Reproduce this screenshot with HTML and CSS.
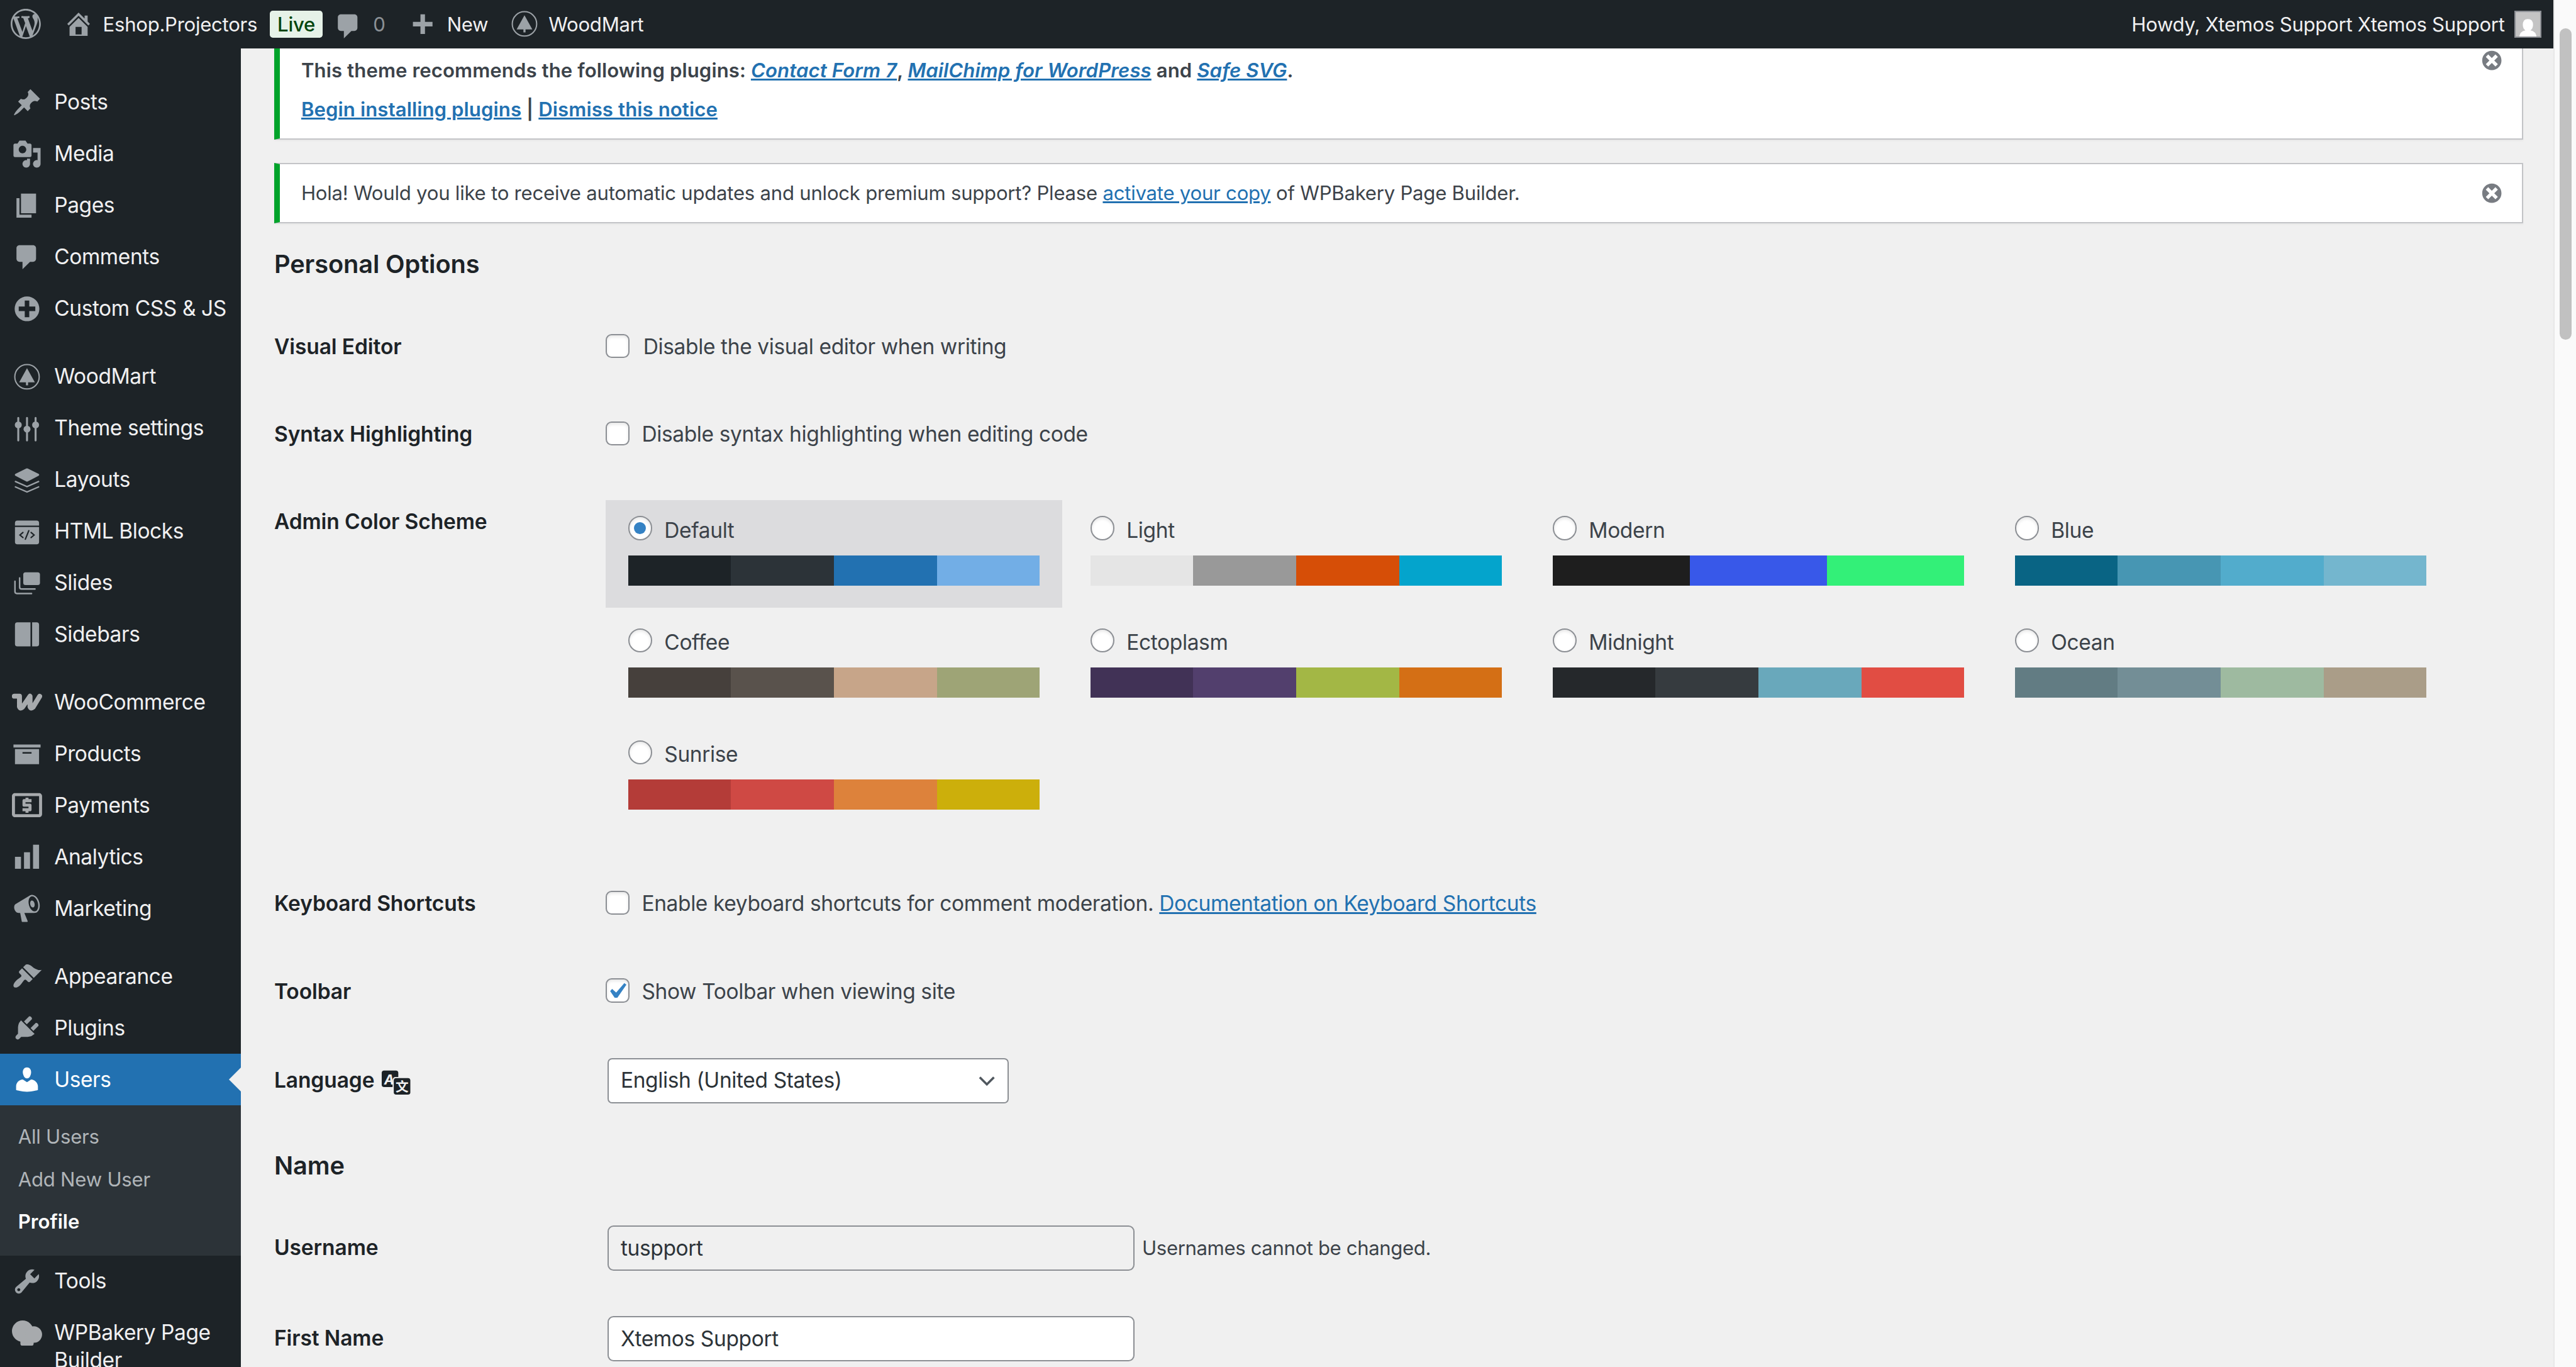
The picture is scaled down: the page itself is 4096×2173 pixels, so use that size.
FILE: index.html
```html
<!DOCTYPE html>
<html lang="en-US">
  <head>
    <meta charset="utf-8">
    <title>Profile</title>
    <link rel="stylesheet" href="styles.css">
  </head>
  <body>
    <svg class="sprite" aria-hidden="true">
      <symbol id="i-wordpress" viewBox="0 0 20 20"><path d="M20 10c0-5.51-4.49-10-10-10C4.48 0 0 4.49 0 10c0 5.52 4.48 10 10 10 5.51 0 10-4.48 10-10zM7.78 15.37L4.37 6.22c.55-.02 1.17-.08 1.17-.08.5-.06.44-1.13-.06-1.11 0 0-1.45.11-2.37.11-.18 0-.37 0-.58-.01C4.12 2.69 6.87 1.11 10 1.11c2.33 0 4.45.87 6.05 2.34-.68-.11-1.65.39-1.65 1.58 0 .74.45 1.36.9 2.1.35.61.55 1.36.55 2.46 0 1.49-1.4 5-1.4 5l-3.03-8.37c.54-.02.82-.17.82-.17.5-.05.44-1.25-.06-1.22 0 0-1.44.12-2.38.12-.87 0-2.33-.12-2.33-.12-.5-.03-.56 1.2-.06 1.22l.92.08 1.26 3.41zM17.41 10c.24-.64.74-1.87.43-4.25.7 1.29 1.05 2.71 1.05 4.25 0 3.29-1.73 6.24-4.4 7.78.97-2.59 1.94-5.2 2.92-7.78zM6.1 18.09C3.12 16.65 1.11 13.53 1.11 10c0-1.3.23-2.48.72-3.59C3.25 10.3 4.67 14.2 6.1 18.09zm4.03-6.63l2.58 6.98c-.86.29-1.76.45-2.71.45-.79 0-1.57-.11-2.29-.33.81-2.38 1.62-4.74 2.42-7.1z"/></symbol>
      <symbol id="i-home" viewBox="0 0 20 20"><path d="M16 8.5l1.53 1.53-1.06 1.06L10 4.6l-6.47 6.49-1.06-1.06L10 2.5l4 4v-2h2v4zm-6-2.46l6 5.99V18H4v-5.97zM12 17v-5H8v5h4z"/></symbol>
      <symbol id="i-comment" viewBox="0 0 20 20"><path d="M5 2h9c1.1 0 2 .9 2 2v7c0 1.1-.9 2-2 2h-2l-5 5v-5H5c-1.1 0-2-.9-2-2V4c0-1.1.9-2 2-2z"/></symbol>
      <symbol id="i-plus" viewBox="0 0 20 20"><path d="M17 7v3h-5v5H9v-5H4V7h5V2h3v5h5z"/></symbol>
      <symbol id="i-woodmart" viewBox="0 0 20 20"><circle cx="10" cy="10" r="8.1" fill="none" stroke="currentColor" stroke-width=".85"/><path d="M10 4.3l5.2 9.4h-4.5v2H9.3v-2H4.8z"/></symbol>
      <symbol id="i-post" viewBox="0 0 20 20"><path d="M10.44 3.02l1.82-1.82 6.36 6.35-1.83 1.82c-1.05-.68-2.48-.57-3.41.36l-.75.75c-.92.93-1.04 2.35-.35 3.41l-1.83 1.82-2.41-2.41-2.8 2.79c-.42.42-3.38 2.71-3.8 2.29s1.86-3.39 2.28-3.81l2.79-2.79L4.1 9.36l1.83-1.82c1.05.69 2.48.57 3.4-.36l.75-.75c.93-.92 1.05-2.35.36-3.41z"/></symbol>
      <symbol id="i-media" viewBox="0 0 20 20"><path d="M13 11V4c0-.55-.45-1-1-1h-1.67L9 1H5L3.67 3H2c-.55 0-1 .45-1 1v7c0 .55.45 1 1 1h10c.55 0 1-.45 1-1zM7 4.5c1.38 0 2.5 1.12 2.5 2.5S8.38 9.5 7 9.5 4.5 8.38 4.5 7 5.62 4.5 7 4.5zM14 6h5v10.5c0 1.38-1.12 2.5-2.5 2.5S14 17.88 14 16.5s1.12-2.5 2.5-2.5c.17 0 .34.02.5.05V9h-3V6zm-4 8.05V13h2v3.5c0 1.38-1.12 2.5-2.5 2.5S7 17.88 7 16.5 8.12 14 9.5 14c.17 0 .34.02.5.05z"/></symbol>
      <symbol id="i-page" viewBox="0 0 20 20"><path d="M6 15V2h10v13H6zm-1 1h8v2H3V5h2v11z"/></symbol>
      <symbol id="i-plus-alt" viewBox="0 0 20 20"><path d="M15.8 4.2c3.2 3.21 3.2 8.39 0 11.6-3.21 3.2-8.39 3.2-11.6 0C1 12.59 1 7.41 4.2 4.2 7.41 1 12.59 1 15.8 4.2zm-4.3 11.3v-4h4v-3h-4v-4h-3v4h-4v3h4v4h3z"/></symbol>
      <symbol id="i-sliders" viewBox="0 0 20 20"><g stroke="currentColor" stroke-width="1.3" stroke-linecap="round"><path d="M4.2 3v15M10 3v15M15.7 3v15"/></g><circle cx="4.2" cy="7.7" r="2.3"/><circle cx="10" cy="10.5" r="2.3"/><circle cx="15.7" cy="7.7" r="2.3"/></symbol>
      <symbol id="i-layers" viewBox="0 0 20 20"><path d="M9.5 2.4q.5-.3 1 0l7.2 3.6q.8.6 0 1.2l-7.2 3.8q-.5.3-1 0L2.3 7.2q-.8-.6 0-1.2z"/><path d="M2.3 11l7.7 3.4 7.7-3.4M2.3 14.6l7.7 3.4 7.7-3.4" fill="none" stroke="currentColor" stroke-width=".95" stroke-linecap="round"/></symbol>
      <symbol id="i-code" viewBox="0 0 20 20"><path d="M3.6 2.7h12.8q1.6 0 1.6 1.6v1.8H2V4.3q0-1.6 1.6-1.6zM2 7h16v9.9q0 1.6-1.6 1.6H3.6Q2 18.500 2 16.900z"/><path class="cut" d="M7.3 10.600L5.300 12.300l2 1.700M12.700 10.600l2 1.700-2 1.700M11.200 9.400l-2.300 5.700"/></symbol>
      <symbol id="i-slides" viewBox="0 0 20 20"><rect x="7.5" y="3.2" width="11.1" height="8.5" rx="1.5"/><path d="M5.1 7v6q0 1.3 1.3 1.3h8.9M2 9.200v6.800q0 1.300 1.300 1.300h9.700" fill="none" stroke="currentColor" stroke-width="1" stroke-linecap="round"/></symbol>
      <symbol id="i-sidebars" viewBox="0 0 20 20"><path d="M3.6 2.2h8.7v16H3.6Q2 18.200 2 16.600V3.800q0-1.600 1.600-1.600zM13.400 2.200h3q1.600 0 1.600 1.600v12.800q0 1.600-1.600 1.600h-3z"/></symbol>
      <symbol id="i-woo" viewBox="0 0 20 20"><path d="M1.6 5.700H5v7q.6 1.600 2 .3l5-7.300v7q.6 1.600 2 .3l4.400-7.200" fill="none" stroke="currentColor" stroke-width="3.3" stroke-linecap="round" stroke-linejoin="round"/></symbol>
      <symbol id="i-archive" viewBox="0 0 20 20"><path d="M19 4v2H1V4h18zM2 7h16v10H2V7zm11 3V9H7v1h6z"/></symbol>
      <symbol id="i-payments" viewBox="2 2 20 20"><path d="M11 17h2v-1h1c.55 0 1-.45 1-1v-3c0-.55-.45-1-1-1h-3v-1h4V8h-2V7h-2v1h-1c-.55 0-1 .45-1 1v3c0 .55.45 1 1 1h3v1H9v2h2v1zm9-13H4c-1.11 0-1.99.89-1.99 2L2 18c0 1.110.890 2 2 2h16c1.110 0 2-.890 2-2V6c0-1.110-.890-2-2-2zm0 14H4V6h16v12z"/></symbol>
      <symbol id="i-chart" viewBox="0 0 20 20"><path d="M18 18V2h-4v16h4zm-6 0V7H8v11h4zm-6 0v-8H2v8h4z"/></symbol>
      <symbol id="i-megaphone" viewBox="0 0 20 20"><path fill-rule="evenodd" d="M18.150 5.940c.46 1.620.38 3.220-.02 4.480-.42 1.280-1.260 2.180-2.300 2.480-.16.060-.26.060-.4.060-.06.020-.12.020-.18.020-.06.020-.14.020-.22.020h-6.800l2.220 5.500c.02.140-.06.260-.14.340-.08.100-.24.160-.34.160H6.950c-.1 0-.26-.06-.34-.16-.08-.08-.16-.2-.14-.34l-1-5.500H4.250l-.02-.02c-.5.060-1.080-.18-1.540-.62s-.88-1.080-1.060-1.880c-.24-.8-.2-1.560-.02-2.200.18-.62.58-1.080 1.060-1.300l.02-.02 9-5.400c.1-.06.18-.1.24-.16.06-.04.140-.08.240-.12.160-.08.280-.12.500-.18 1.040-.3 2.240.1 3.220.98s1.840 2.240 2.260 3.860zm-2.580 5.980h-.02c.4-.1.740-.34 1.040-.7.580-.7.860-1.760.860-3.040 0-.64-.1-1.300-.28-1.980-.34-1.360-1.020-2.500-1.780-3.240s-1.680-1.100-2.460-.88c-.82.220-1.400.96-1.700 2-.32 1.040-.28 2.360.06 3.720.38 1.360 1 2.500 1.800 3.240.78.740 1.620 1.100 2.480.88zm-2.540-7.080c.22-.04.42-.02.62.04.38.16.76.48 1.020 1s.42 1.200.42 1.780c0 .3-.04.56-.12.8-.18.48-.44.840-.86.940-.34.1-.8-.06-1.140-.4s-.64-.86-.78-1.500c-.18-.62-.12-1.240.02-1.720s.48-.84.82-.94z"/></symbol>
      <symbol id="i-brush" viewBox="0 0 20 20"><path d="M14.480 11.060L7.410 3.990l1.500-1.500c.5-.56 2.300-.47 3.510.32 1.210.8 1.430 1.280 2.910 2.100 1.180.64 2.450 1.260 4.450.85zm-.71.71L6.700 4.700 4.930 6.470c-.39.39-.39 1.020 0 1.410l1.060 1.060c.39.39.39 1.030 0 1.420-.6.6-1.430 1.110-2.210 1.690-.35.26-.7.53-1.010.84C1.430 14.230.4 16.080 1.400 17.070c.99 1 2.840-.03 4.180-1.360.31-.31.58-.66.85-1.020.57-.78 1.080-1.610 1.690-2.210.39-.39 1.020-.39 1.410 0l1.060 1.060c.39.39 1.020.39 1.410 0z"/></symbol>
      <symbol id="i-plugin" viewBox="0 0 20 20"><path d="M13.110 4.360L9.870 7.600 8 5.730l3.240-3.240c.35-.34 1.050-.2 1.560.32.520.51.660 1.210.310 1.550zm-8 1.770l.91-1.120 9.010 9.010-1.190.84c-.71.71-2.630 1.160-3.820 1.160H6.140L4.900 17.260c-.59.59-1.540.59-2.120 0-.59-.58-.59-1.530 0-2.120l1.240-1.240v-3.880c0-1.130.4-3.190 1.090-3.890zm7.260 3.970l3.240-3.240c.34-.35 1.040-.21 1.550.31.520.51.660 1.210.310 1.550l-3.240 3.250z"/></symbol>
      <symbol id="i-user" viewBox="0 0 20 20"><path d="M10 9.250c-2.270 0-2.730-3.440-2.730-3.440C7 4.020 7.820 2 9.970 2c2.160 0 2.980 2.020 2.710 3.810 0 0-.41 3.440-2.680 3.440zm0 2.570L12.720 10c2.390 0 4.520 2.330 4.520 4.530v2.490s-3.650 1.130-7.240 1.130c-3.650 0-7.240-1.130-7.240-1.130v-2.490c0-2.250 1.940-4.480 4.470-4.480z"/></symbol>
      <symbol id="i-tools" viewBox="0 0 20 20"><path fill-rule="evenodd" d="M16.680 9.770c-1.340 1.340-3.300 1.670-4.950.99l-5.410 6.520c-.99.99-2.590.99-3.580 0s-.99-2.590 0-3.570l6.520-5.420c-.68-1.650-.35-3.610.99-4.950 1.280-1.280 3.120-1.620 4.720-1.060l-2.890 2.890 2.820 2.820 2.860-2.870c.53 1.580.18 3.390-1.080 4.650zM3.810 16.210c.4.39 1.040.39 1.430 0 .4-.4.4-1.040 0-1.430-.39-.4-1.030-.4-1.430 0-.39.39-.39 1.030 0 1.430z"/></symbol>
      <symbol id="i-bakery" viewBox="0 0 20 20"><circle cx="7.1" cy="8.800" r="7.100"/><circle cx="14.500" cy="11" r="5.500"/><path d="M5.600 14h8.800v2.900q-.1 1.500-1 1.500H6.600q-1 0-1-1.500z"/></symbol>
      <symbol id="i-dismiss" viewBox="0 0 20 20"><path d="M10 2c4.420 0 8 3.580 8 8s-3.580 8-8 8-8-3.580-8-8 3.580-8 8-8zm5 11l-3-3 3-3-2-2-3 3-3-3-2 2 3 3-3 3 2 2 3-3 3 3z"/></symbol>
    </svg>

    <div class="page">
      <div class="screen">
        <header class="adminbar">
          <a class="bar-logo"><svg class="icon"><use href="#i-wordpress"/></svg></a>
          <a class="bar-site"><svg class="icon"><use href="#i-home"/></svg><span>Eshop.Projectors</span></a>
          <span class="badge">Live</span>
          <a class="bar-comments"><svg class="icon"><use href="#i-comment"/></svg><span>0</span></a>
          <a class="bar-new"><svg class="icon"><use href="#i-plus"/></svg><span>New</span></a>
          <a class="bar-theme"><svg class="icon"><use href="#i-woodmart"/></svg><span>WoodMart</span></a>
          <a class="bar-account">
            <span>Howdy, Xtemos Support Xtemos Support</span>
            <svg class="avatar" viewBox="0 0 18 18"><rect width="18" height="18" fill="#8c8f94"/><rect x=".9" y=".9" width="16.200" height="16.200" fill="#c4c4c4"/><path d="M3.300 17.100q.3-3.300 4-4.100-1.700-1.200-1.700-3.600 0-3.900 3.400-3.900t3.400 3.900q0 2.400-1.700 3.600 3.700.8 4 4.100z" fill="#fff"/></svg>
          </a>
        </header>

        <div class="columns">
          <nav class="menu">
            <ul>
              <li><svg class="icon"><use href="#i-post"/></svg><span>Posts</span></li>
              <li><svg class="icon"><use href="#i-media"/></svg><span>Media</span></li>
              <li><svg class="icon"><use href="#i-page"/></svg><span>Pages</span></li>
              <li><svg class="icon"><use href="#i-comment"/></svg><span>Comments</span></li>
              <li><svg class="icon"><use href="#i-plus-alt"/></svg><span>Custom CSS &amp; JS</span></li>
              <li class="separator"></li>
              <li><svg class="icon"><use href="#i-woodmart"/></svg><span>WoodMart</span></li>
              <li><svg class="icon"><use href="#i-sliders"/></svg><span>Theme settings</span></li>
              <li><svg class="icon"><use href="#i-layers"/></svg><span>Layouts</span></li>
              <li><svg class="icon"><use href="#i-code"/></svg><span>HTML Blocks</span></li>
              <li><svg class="icon"><use href="#i-slides"/></svg><span>Slides</span></li>
              <li><svg class="icon"><use href="#i-sidebars"/></svg><span>Sidebars</span></li>
              <li class="separator"></li>
              <li><svg class="icon light"><use href="#i-woo"/></svg><span>WooCommerce</span></li>
              <li><svg class="icon"><use href="#i-archive"/></svg><span>Products</span></li>
              <li><svg class="icon light"><use href="#i-payments"/></svg><span>Payments</span></li>
              <li><svg class="icon"><use href="#i-chart"/></svg><span>Analytics</span></li>
              <li><svg class="icon"><use href="#i-megaphone"/></svg><span>Marketing</span></li>
              <li class="separator"></li>
              <li><svg class="icon"><use href="#i-brush"/></svg><span>Appearance</span></li>
              <li><svg class="icon"><use href="#i-plugin"/></svg><span>Plugins</span></li>
              <li class="current"><svg class="icon"><use href="#i-user"/></svg><span>Users</span></li>
            </ul>
            <ul class="submenu">
              <li>All Users</li>
              <li>Add New User</li>
              <li class="active">Profile</li>
            </ul>
            <ul>
              <li><svg class="icon"><use href="#i-tools"/></svg><span>Tools</span></li>
              <li><svg class="icon light"><use href="#i-bakery"/></svg><span>WPBakery Page Builder</span></li>
            </ul>
          </nav>

          <main class="content">
            <div class="notice notice-plugins">
              <div>
                <p><strong>This theme recommends the following plugins: <a href="#"><em>Contact Form 7</em></a>, <a href="#"><em>MailChimp for WordPress</em></a> and <a href="#"><em>Safe SVG</em></a>.</strong></p>
                <p class="notice-links"><strong><a href="#">Begin installing plugins</a> | <a href="#">Dismiss this notice</a></strong></p>
              </div>
              <svg class="dismiss"><use href="#i-dismiss"/></svg>
            </div>
            <div class="notice notice-builder">
              <p>Hola! Would you like to receive automatic updates and unlock premium support? Please <a href="#">activate your copy</a> of WPBakery Page Builder.</p>
              <svg class="dismiss"><use href="#i-dismiss"/></svg>
            </div>

            <h2>Personal Options</h2>
            <div class="form">
              <div class="row">
                <div class="label">Visual Editor</div>
                <label class="check check-wide"><input type="checkbox"><span>Disable the visual editor when writing</span></label>
              </div>
              <div class="row">
                <div class="label">Syntax Highlighting</div>
                <label class="check"><input type="checkbox"><span>Disable syntax highlighting when editing code</span></label>
              </div>
              <div class="row row-schemes">
                <div class="label">Admin Color Scheme</div>
                <div class="schemes">
                  <div class="scheme selected">
                    <label><input type="radio" name="scheme" checked><span>Default</span></label>
                    <div class="palette"><i style="background:#1d2327"></i><i style="background:#2c3338"></i><i style="background:#2271b1"></i><i style="background:#72aee6"></i></div>
                  </div>
                  <div class="scheme">
                    <label><input type="radio" name="scheme"><span>Light</span></label>
                    <div class="palette"><i style="background:#e5e5e5"></i><i style="background:#999"></i><i style="background:#d64e07"></i><i style="background:#04a4cc"></i></div>
                  </div>
                  <div class="scheme">
                    <label><input type="radio" name="scheme"><span>Modern</span></label>
                    <div class="palette"><i style="background:#1e1e1e"></i><i style="background:#3858e9"></i><i style="background:#33f078"></i></div>
                  </div>
                  <div class="scheme">
                    <label><input type="radio" name="scheme"><span>Blue</span></label>
                    <div class="palette"><i style="background:#096484"></i><i style="background:#4796b3"></i><i style="background:#52accc"></i><i style="background:#74b6ce"></i></div>
                  </div>
                  <div class="scheme">
                    <label><input type="radio" name="scheme"><span>Coffee</span></label>
                    <div class="palette"><i style="background:#46403c"></i><i style="background:#59524c"></i><i style="background:#c7a589"></i><i style="background:#9ea476"></i></div>
                  </div>
                  <div class="scheme">
                    <label><input type="radio" name="scheme"><span>Ectoplasm</span></label>
                    <div class="palette"><i style="background:#413256"></i><i style="background:#523f6d"></i><i style="background:#a3b745"></i><i style="background:#d46f15"></i></div>
                  </div>
                  <div class="scheme">
                    <label><input type="radio" name="scheme"><span>Midnight</span></label>
                    <div class="palette"><i style="background:#25282b"></i><i style="background:#363b3f"></i><i style="background:#69a8bb"></i><i style="background:#e14d43"></i></div>
                  </div>
                  <div class="scheme">
                    <label><input type="radio" name="scheme"><span>Ocean</span></label>
                    <div class="palette"><i style="background:#627c83"></i><i style="background:#738e96"></i><i style="background:#9ebaa0"></i><i style="background:#aa9d88"></i></div>
                  </div>
                  <div class="scheme">
                    <label><input type="radio" name="scheme"><span>Sunrise</span></label>
                    <div class="palette"><i style="background:#b43c38"></i><i style="background:#cf4944"></i><i style="background:#dd823b"></i><i style="background:#ccaf0b"></i></div>
                  </div>
                </div>
              </div>
              <div class="row">
                <div class="label">Keyboard Shortcuts</div>
                <label class="check"><input type="checkbox"><span>Enable keyboard shortcuts for comment moderation. <a href="#">Documentation on Keyboard Shortcuts</a></span></label>
              </div>
              <div class="row">
                <div class="label">Toolbar</div>
                <label class="check"><input type="checkbox" checked><span>Show Toolbar when viewing site</span></label>
              </div>
              <div class="row row-field">
                <div class="label">Language
                  <svg class="translate" viewBox="0 0 20 17">
                    <rect x=".4" y=".3" width="11" height="11" rx="1.600"/>
                    <text class="tr-a" x="2" y="9.400">A</text>
                    <rect class="tr-gap" x="7.600" y="4.600" width="12.400" height="12.400" rx="2"/>
                    <rect x="8.400" y="5.300" width="11" height="11" rx="1.600"/>
                    <text class="tr-b" x="9.600" y="14.100">文</text>
                  </svg>
                </div>
                <div class="select">
                  <span>English (United States)</span>
                  <svg viewBox="0 0 11 7"><path d="M.8 1l4.700 4.700L10.200 1"/></svg>
                </div>
              </div>
            </div>

            <h2 class="name-title">Name</h2>
            <div class="form">
              <div class="row row-field">
                <div class="label">Username</div>
                <input class="text" type="text" value="tuspport" readonly>
                <span class="description">Usernames cannot be changed.</span>
              </div>
              <div class="row row-field">
                <div class="label">First Name</div>
                <input class="text" type="text" value="Xtemos Support">
              </div>
            </div>
          </main>
        </div>
      </div>
      <div class="scrollbar"><div class="thumb"></div></div>
    </div>
  </body>
</html>
```
FILE: styles.css
```css
* {
  box-sizing: border-box;
}

body {
  margin: 0;
  background: #f0f0f0;
  overflow: hidden;
}

/* everything below is in admin pixels, scaled up for the large display */
.page {
  zoom: 2.39532;
  display: flex;
  width: 1710px;
  height: 907.2px;
  overflow: hidden;
  font-family: Inter, "Noto Sans CJK SC", sans-serif;
  font-size: 14px;
  line-height: 1.3;
  letter-spacing: -0.16px;
  color: #3c434a;
}

.sprite {
  position: absolute;
  width: 0;
  height: 0;
}

.icon {
  width: 20px;
  height: 20px;
  flex: none;
  color: #9ca2a7;
  fill: currentColor;
}

.icon.light {
  color: #a7aaad;
}

.cut {
  fill: none;
  stroke: #1d2327;
  stroke-width: 0.9;
  stroke-linecap: round;
}

a {
  color: #2271b1;
}

ul {
  margin: 0;
  padding: 0;
  list-style: none;
}

p {
  margin: 0;
}

strong,
h2,
.label {
  font-weight: 600;
}

.screen {
  width: 1695.2px;
  display: flex;
  flex-direction: column;
}

/* top bar */
.adminbar {
  display: flex;
  align-items: center;
  height: 32px;
  flex: none;
  padding: 0 8.2px 0 7px;
  background: #1d2327;
  color: #f0f0f1;
  font-size: 13px;
  letter-spacing: -0.12px;
}

.adminbar a {
  display: flex;
  align-items: center;
  color: #f0f0f1;
}

.adminbar a span {
  padding-top: 0.8px;
}

.bar-site {
  margin-left: 15px;
  gap: 6.3px;
  width: 137px;
}

.badge {
  width: 35.3px;
  height: 18px;
  border-radius: 2px;
  background: #e6f2e8;
  color: #00450c;
  font-weight: 500;
  line-height: 18.6px;
  text-align: center;
}

.bar-comments {
  width: 56px;
  margin-left: 6.9px;
  gap: 6.5px;
}

.adminbar .bar-comments span {
  color: #8c9196;
}

.bar-comments .icon,
.bar-new .icon {
  position: relative;
  top: 1.5px;
}

.adminbar .bar-comments,
.adminbar .bar-new {
  margin-right: -7px;
}

.adminbar .bar-new {
  width: 75px;
  gap: 6.5px;
}

.bar-theme {
  gap: 6px;
}

.bar-account {
  margin-left: auto;
  gap: 6.3px;
}

.avatar {
  width: 18px;
  height: 18px;
}

.columns {
  display: flex;
  flex: 1;
  min-height: 0;
}

/* side menu */
.menu {
  width: 160px;
  flex: none;
  padding-top: 19px;
  background: #1d2327;
  color: #f0f0f1;
  letter-spacing: -0.18px;
}

.menu li {
  display: flex;
  align-items: flex-start;
  position: relative;
  min-height: 34.2px;
  padding: 7px 4px 7px 8px;
  gap: 8px;
}

.menu li span {
  padding-top: 1px;
}

.menu .separator {
  min-height: 11px;
  padding: 0;
}

.menu .current {
  background: #2271b1;
  color: #fff;
}

.menu .current .icon {
  color: #fff;
}

/* notch pointing at the page body */
.current::after {
  content: "";
  position: absolute;
  right: 0;
  top: 9px;
  border: 8px solid transparent;
  border-right-color: #f0f0f0;
  border-left: 0;
}

.menu .submenu {
  padding: 7px 0 8px;
  background: #2c3338;
  font-size: 13px;
  line-height: 18.2px;
  letter-spacing: -0.1px;
  color: #b0b5b8;
}

.menu .submenu li {
  min-height: 0;
  padding: 5px 12px;
}

.menu .submenu .active {
  color: #fff;
  font-weight: 600;
  letter-spacing: 0;
}

/* page body */
.content {
  flex: 1;
  padding: 0 20.4px 0 22px;
}

.notice {
  display: flex;
  justify-content: space-between;
  align-items: flex-start;
  padding: 0 12px 0 14.2px;
  background: #fff;
  border: 1px solid #c3c4c7;
  border-left: 4px solid #00a32a;
  box-shadow: 0 1px 1px rgba(0, 0, 0, 0.04);
  font-size: 13px;
  line-height: 20px;
  letter-spacing: -0.1px;
}

.notice strong {
  letter-spacing: 0.04px;
}

.notice-plugins {
  height: 60.7px;
  border-top: 0;
  padding-top: 5px;
}

.notice-links {
  margin-top: 6px;
}

.notice-builder {
  height: 40px;
  margin-top: 15.5px;
  align-items: center;
}

.notice-builder p {
  padding-top: 0.6px;
}

.dismiss {
  width: 16px;
  height: 16px;
  fill: #787c82;
}

.notice-plugins .dismiss {
  margin-top: -5px;
}

h2 {
  margin: 15px 0 14px;
  font-size: 16.6px;
  line-height: 24px;
  letter-spacing: -0.05px;
  color: #1d2327;
}

.row {
  display: flex;
  align-items: center;
  height: 58.2px;
}

.label {
  width: 220px;
  flex: none;
  display: flex;
  align-items: center;
  letter-spacing: -0.04px;
  color: #1d2327;
}

.check {
  display: flex;
  align-items: center;
  gap: 8px;
}

.check-wide {
  gap: 9px;
}

input[type="checkbox"],
input[type="radio"] {
  appearance: none;
  width: 16px;
  height: 16px;
  margin: 0;
  flex: none;
  border: 1px solid #8c8f94;
  border-radius: 4px;
  background: #fff;
  box-shadow: inset 0 1px 2px rgba(0, 0, 0, 0.1);
}

.check input[type="checkbox"] {
  margin-bottom: 1.4px;
}

input[type="checkbox"]:checked::before {
  content: "";
  display: block;
  width: 14px;
  height: 14px;
  background: #3582c4;
  clip-path: polygon(2.2px 7.5px, 3.5px 6.1px, 6.2px 8.5px, 11.6px 2.2px, 13px 3.2px, 7px 11.9px, 5.2px 11.9px);
}

input[type="radio"] {
  border-radius: 50%;
}

input[type="radio"]:checked::before {
  content: "";
  display: block;
  width: 8px;
  height: 8px;
  margin: 3.1px;
  border-radius: 50%;
  background: #3582c4;
}

.row-schemes {
  height: 253.2px;
  align-items: flex-start;
}

.row-schemes .label {
  padding-top: 19.8px;
}

.schemes {
  display: grid;
  grid-template-columns: repeat(4, 303.2px);
  gap: 2.9px 3.65px;
  padding-top: 14.4px;
}

.scheme {
  height: 71.5px;
  padding: 10.5px 15px 0;
}

.scheme.selected {
  background: #dcdcde;
}

.scheme label {
  display: flex;
  gap: 8px;
  height: 26.2px;
}

.scheme label span {
  padding-top: 0.5px;
}

.palette {
  display: flex;
  height: 20px;
}

.palette i {
  flex: 1;
}

.row-field {
  height: 60.1px;
}

.translate {
  width: 20px;
  height: 17px;
  margin: 3px 0 0 4.6px;
  fill: #1d2327;
}

.translate text {
  fill: #f0f0f0;
}

.translate .tr-a {
  font: italic 700 9px Inter, sans-serif;
}

.translate .tr-b {
  font: 700 8.6px "Noto Sans CJK SC", sans-serif;
}

.translate .tr-gap {
  fill: #f0f0f0;
}

.select,
.text {
  height: 30px;
  margin-left: 1.2px;
  padding: 0 8px;
  border: 1px solid #8c8f94;
  border-radius: 4px;
  background: #fff;
  color: #2c3338;
  font-family: inherit;
  font-size: 14px;
  letter-spacing: inherit;
}

.select {
  display: flex;
  align-items: center;
  justify-content: space-between;
  width: 266.4px;
  border-radius: 3px;
}

.select svg {
  width: 11px;
  height: 7px;
  fill: none;
  stroke: #50575e;
  stroke-width: 1.5;
}

.text {
  width: 350px;
}

.text[readonly] {
  background: #f0f0f0;
}

.name-title {
  margin: 14px 0 13px;
}

.description {
  margin-left: 5px;
  font-size: 13px;
}

/* page scrollbar */
.scrollbar {
  flex: 1;
  padding: 18.8px 3px 0;
  background: #fafafa;
  border-left: 1px solid #e8e8e8;
}

.thumb {
  width: 8px;
  height: 206.7px;
  border-radius: 4px;
  background: #c1c1c1;
}
```
